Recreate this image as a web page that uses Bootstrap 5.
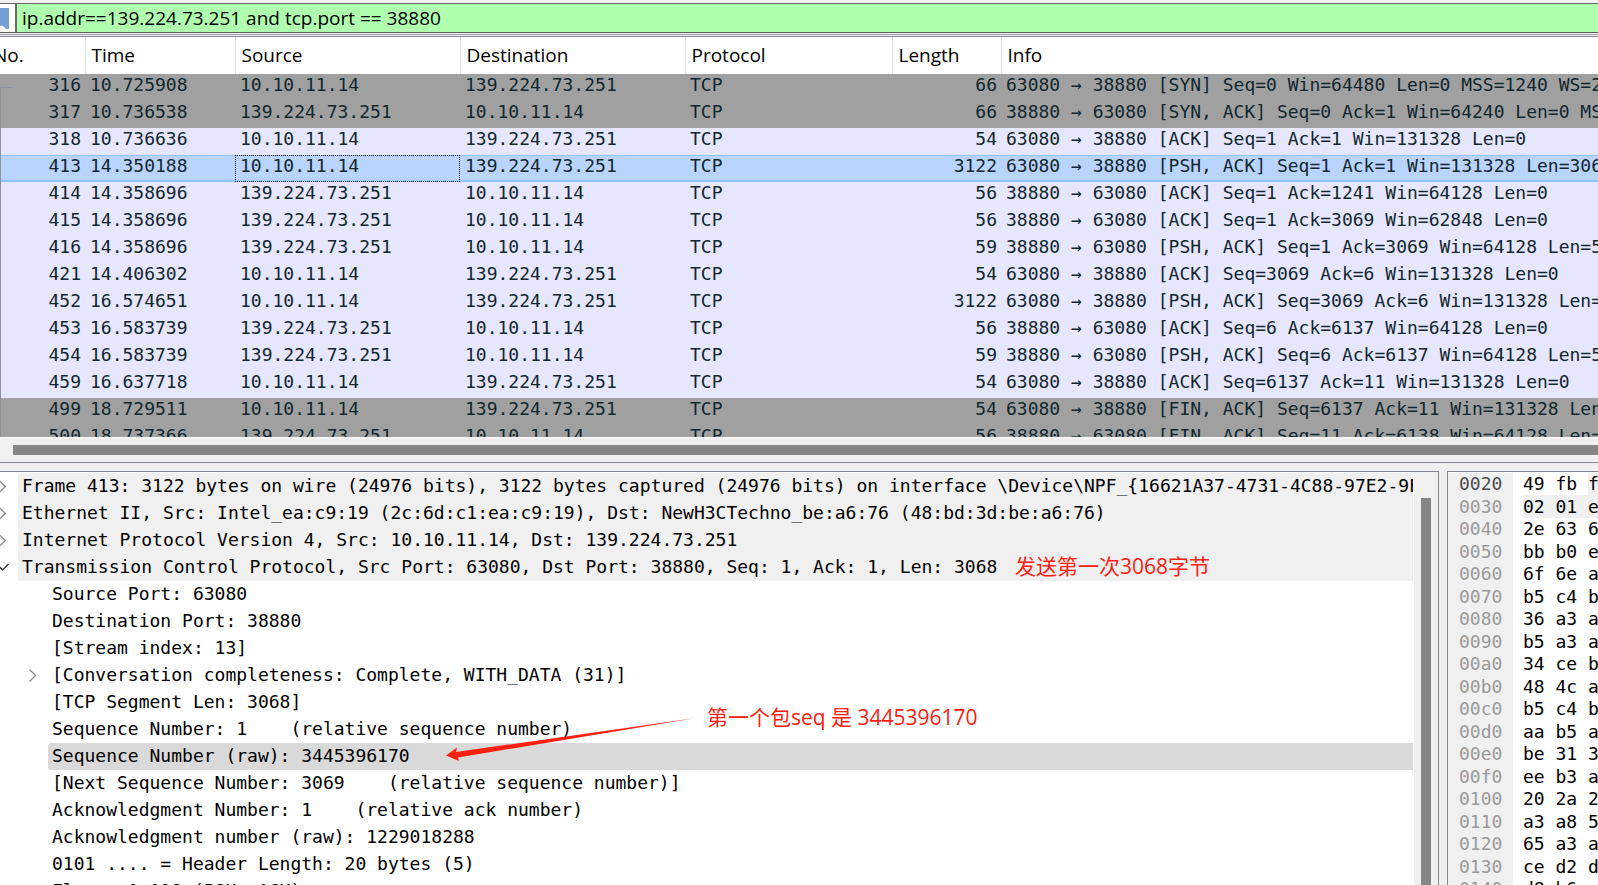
<!DOCTYPE html>
<html lang="en">
<head>
<meta charset="utf-8">
<meta name="viewport" content="width=device-width, initial-scale=1">
<title>Packet capture</title>
<link href="https://cdn.jsdelivr.net/npm/bootstrap@5.3.0/dist/css/bootstrap.min.css" rel="stylesheet">
<style>
  body { background: #f0f0f0; color: #000; font: 19px/28px "Open Sans", "Noto Sans CJK SC", sans-serif; }
  .mono { font-family: Consolas, "DejaVu Sans Mono", monospace; font-size: 18px; }

  /* Display filter */
  .filterbar { margin-top: 3px; border-top: 1px solid #6b6b6b; border-bottom: 1px solid #5a5a5a; background: #afffaf; }
  .bookmark { width: 17px; height: 28px; border: 0; padding: 0; background: #fff; border-right: 2px solid #6a6a6a; }
  .filter-input { height: 28px; border: 0; padding: 0 5px; background: #afffaf; color: #000; outline: 0; }

  /* Packet list */
  .packet-pane { margin-top: 1px; border-top: 1px solid #a0a0a0; padding-top: 1px; border-bottom: 1px solid #828790; }
  .packet-view { height: 401px; border-top: 1px solid #828790; background: #fff; }
  .packets { table-layout: fixed; width: 100%; white-space: nowrap; color: #12272e; }
  .packets th, .packets td { padding: 0 0 5px 5px; line-height: 22px; overflow: hidden; }
  .packets th { font: 400 19px/28px "Open Sans", sans-serif; color: #000; padding: 4px 0 5px 6px; border-right: 1px solid #e2e2e2; }
  .packets th:last-child { border-right: 0; }
  .packets th:first-child { padding-left: 0; text-indent: -7px; }
  .packets .num { text-align: right; padding-right: 4px; }
  .c-no { width: 85px; } .c-time { width: 150px; } .c-addr { width: 225px; } .c-proto { width: 207px; } .c-len { width: 109px; }
  .row-edge { background: #a0a0a0; }
  .row-tcp { background: #e7e6ff; }
  .row-picked { background: #b8d4ff; box-shadow: inset 0 1px #8fc1fa, inset 0 -2px #8fc1fa; }
  .cell-focus { outline: 1px dotted #000; outline-offset: -1px; }
  .stream-line { left: 0; top: 50px; bottom: 0; width: 12px; border-left: 1px solid #8a929c; border-top: 1px solid #8a929c; }
  .hscroll { padding: 7px 0 7px 13px; border-top: 1px solid #fff; }
  .hthumb { height: 10px; background: #868686; }

  /* Lower panes */
  .panes { margin-top: 8px; gap: 8px; min-height: 0; }
  .pane { border-top: 1px solid #828790; background: #fff; min-height: 0; }
  .tree-pane { border-right: 1px solid #828790; min-width: 0; }
  .tree { line-height: 25px; padding-top: 1px; min-width: 0; }
  .tree li { display: flex; }
  .twig { flex: none; width: 18px; height: 27px; }
  .deep .twig { width: 48px; }
  .label-text { flex: 1; min-width: 0; overflow: hidden; padding-left: 4px; white-space: pre; }
  .layer .label-text { background: #f0f0f0; }
  .chosen .label-text { background: #d9d9d9; border-radius: 3px 0 0 3px; }
  .vscroll { width: 25px; padding: 26px 7px 0; background: #f0f0f0; border-left: 1px solid #fff; }
  .vthumb { background: #868686; height: 100%; }
  .bytes-pane { width: 151px; border-left: 1px solid #828790; padding-top: 1px; }
  .bytes { line-height: 22px; white-space: pre; width: 100%; table-layout: fixed; }
  .bytes tr:nth-child(even) td, .bytes tr:nth-child(even) th { height: 23px; line-height: 23px; }
  .bytes td, .bytes th { padding: 0; overflow: hidden; }
  .bytes th { width: 65px; padding-left: 11px; font-weight: 400; background: #f0f0f0; color: #9a9a9a; }
  .bytes .now th { color: #4c4c4c; }
  .bytes td { padding-left: 10px; }
  .shade { display: inline-block; width: 100%; background: #f0f0f0; }

  /* Annotations over the tree */
  .remark { position: absolute; color: #ff2010; font-size: 21px; white-space: nowrap; }
  .remark-a { left: 1015px; top: 80px; }
  .remark-b { left: 707px; top: 231px; }
  .arrow { position: absolute; left: 446px; top: 243px; }
</style>
</head>
<body class="vh-100 d-flex flex-column overflow-hidden">
<header class="filterbar d-flex">
  <button class="bookmark flex-shrink-0 d-flex" type="button" aria-label="Filter bookmarks">
    <svg width="10" height="28" viewBox="0 0 10 28"><path d="M0 4h9v21H6Q3 20 0 22z" fill="#729fd6"/></svg>
  </button>
  <input class="filter-input flex-grow-1" type="text" aria-label="Display filter" value="ip.addr==139.224.73.251 and tcp.port == 38880">
</header>

<section class="packet-pane">
  <div class="packet-view overflow-hidden position-relative">
    <table class="packets mono">
      <colgroup><col class="c-no"><col class="c-time"><col class="c-addr"><col class="c-addr"><col class="c-proto"><col class="c-len"><col></colgroup>
      <thead><tr><th>No.</th><th>Time</th><th>Source</th><th>Destination</th><th>Protocol</th><th>Length</th><th>Info</th></tr></thead>
      <tbody>
        <tr class="row-edge"><td class="num">316</td><td>10.725908</td><td>10.10.11.14</td><td>139.224.73.251</td><td>TCP</td><td class="num">66</td><td>63080 → 38880 [SYN] Seq=0 Win=64480 Len=0 MSS=1240 WS=256</td></tr>
        <tr class="row-edge"><td class="num">317</td><td>10.736538</td><td>139.224.73.251</td><td>10.10.11.14</td><td>TCP</td><td class="num">66</td><td>38880 → 63080 [SYN, ACK] Seq=0 Ack=1 Win=64240 Len=0 MSS=1460</td></tr>
        <tr class="row-tcp"><td class="num">318</td><td>10.736636</td><td>10.10.11.14</td><td>139.224.73.251</td><td>TCP</td><td class="num">54</td><td>63080 → 38880 [ACK] Seq=1 Ack=1 Win=131328 Len=0</td></tr>
        <tr class="row-picked"><td class="num">413</td><td>14.350188</td><td class="cell-focus">10.10.11.14</td><td>139.224.73.251</td><td>TCP</td><td class="num">3122</td><td>63080 → 38880 [PSH, ACK] Seq=1 Ack=1 Win=131328 Len=3068</td></tr>
        <tr class="row-tcp"><td class="num">414</td><td>14.358696</td><td>139.224.73.251</td><td>10.10.11.14</td><td>TCP</td><td class="num">56</td><td>38880 → 63080 [ACK] Seq=1 Ack=1241 Win=64128 Len=0</td></tr>
        <tr class="row-tcp"><td class="num">415</td><td>14.358696</td><td>139.224.73.251</td><td>10.10.11.14</td><td>TCP</td><td class="num">56</td><td>38880 → 63080 [ACK] Seq=1 Ack=3069 Win=62848 Len=0</td></tr>
        <tr class="row-tcp"><td class="num">416</td><td>14.358696</td><td>139.224.73.251</td><td>10.10.11.14</td><td>TCP</td><td class="num">59</td><td>38880 → 63080 [PSH, ACK] Seq=1 Ack=3069 Win=64128 Len=5</td></tr>
        <tr class="row-tcp"><td class="num">421</td><td>14.406302</td><td>10.10.11.14</td><td>139.224.73.251</td><td>TCP</td><td class="num">54</td><td>63080 → 38880 [ACK] Seq=3069 Ack=6 Win=131328 Len=0</td></tr>
        <tr class="row-tcp"><td class="num">452</td><td>16.574651</td><td>10.10.11.14</td><td>139.224.73.251</td><td>TCP</td><td class="num">3122</td><td>63080 → 38880 [PSH, ACK] Seq=3069 Ack=6 Win=131328 Len=3068</td></tr>
        <tr class="row-tcp"><td class="num">453</td><td>16.583739</td><td>139.224.73.251</td><td>10.10.11.14</td><td>TCP</td><td class="num">56</td><td>38880 → 63080 [ACK] Seq=6 Ack=6137 Win=64128 Len=0</td></tr>
        <tr class="row-tcp"><td class="num">454</td><td>16.583739</td><td>139.224.73.251</td><td>10.10.11.14</td><td>TCP</td><td class="num">59</td><td>38880 → 63080 [PSH, ACK] Seq=6 Ack=6137 Win=64128 Len=5</td></tr>
        <tr class="row-tcp"><td class="num">459</td><td>16.637718</td><td>10.10.11.14</td><td>139.224.73.251</td><td>TCP</td><td class="num">54</td><td>63080 → 38880 [ACK] Seq=6137 Ack=11 Win=131328 Len=0</td></tr>
        <tr class="row-edge"><td class="num">499</td><td>18.729511</td><td>10.10.11.14</td><td>139.224.73.251</td><td>TCP</td><td class="num">54</td><td>63080 → 38880 [FIN, ACK] Seq=6137 Ack=11 Win=131328 Len=0</td></tr>
        <tr class="row-edge"><td class="num">500</td><td>18.737366</td><td>139.224.73.251</td><td>10.10.11.14</td><td>TCP</td><td class="num">56</td><td>38880 → 63080 [FIN, ACK] Seq=11 Ack=6138 Win=64128 Len=0</td></tr>
      </tbody>
    </table>
    <div class="stream-line position-absolute"></div>
  </div>
  <div class="hscroll"><div class="hthumb"></div></div>
</section>

<main class="panes d-flex flex-grow-1">
  <section class="pane tree-pane d-flex flex-grow-1 position-relative overflow-hidden">
    <ul class="tree mono list-unstyled mb-0 flex-grow-1">
      <li class="layer"><svg class="twig" viewBox="0 0 18 27"><path d="M-1 7.500l6.500 6-6.500 6" fill="none" stroke="#8a8a8a" stroke-width="1.300"/></svg><span class="label-text">Frame 413: 3122 bytes on wire (24976 bits), 3122 bytes captured (24976 bits) on interface \Device\NPF_{16621A37-4731-4C88-97E2-9EA</span></li>
      <li class="layer"><svg class="twig" viewBox="0 0 18 27"><path d="M-1 7.500l6.500 6-6.500 6" fill="none" stroke="#8a8a8a" stroke-width="1.300"/></svg><span class="label-text">Ethernet II, Src: Intel_ea:c9:19 (2c:6d:c1:ea:c9:19), Dst: NewH3CTechno_be:a6:76 (48:bd:3d:be:a6:76)</span></li>
      <li class="layer"><svg class="twig" viewBox="0 0 18 27"><path d="M-1 7.500l6.500 6-6.500 6" fill="none" stroke="#8a8a8a" stroke-width="1.300"/></svg><span class="label-text">Internet Protocol Version 4, Src: 10.10.11.14, Dst: 139.224.73.251</span></li>
      <li class="layer"><svg class="twig" viewBox="0 0 18 27"><path d="M-3 10l5.500 6 6-6" fill="none" stroke="#333" stroke-width="1.500"/></svg><span class="label-text">Transmission Control Protocol, Src Port: 63080, Dst Port: 38880, Seq: 1, Ack: 1, Len: 3068</span></li>
      <li class="deep"><span class="twig"></span><span class="label-text">Source Port: 63080</span></li>
      <li class="deep"><span class="twig"></span><span class="label-text">Destination Port: 38880</span></li>
      <li class="deep"><span class="twig"></span><span class="label-text">[Stream index: 13]</span></li>
      <li class="deep"><svg class="twig" viewBox="0 0 48 27"><path d="M29.500 7.500l6 6-6 6" fill="none" stroke="#8a8a8a" stroke-width="1.300"/></svg><span class="label-text">[Conversation completeness: Complete, WITH_DATA (31)]</span></li>
      <li class="deep"><span class="twig"></span><span class="label-text">[TCP Segment Len: 3068]</span></li>
      <li class="deep"><span class="twig"></span><span class="label-text">Sequence Number: 1    (relative sequence number)</span></li>
      <li class="deep chosen"><span class="twig"></span><span class="label-text">Sequence Number (raw): 3445396170</span></li>
      <li class="deep"><span class="twig"></span><span class="label-text">[Next Sequence Number: 3069    (relative sequence number)]</span></li>
      <li class="deep"><span class="twig"></span><span class="label-text">Acknowledgment Number: 1    (relative ack number)</span></li>
      <li class="deep"><span class="twig"></span><span class="label-text">Acknowledgment number (raw): 1229018288</span></li>
      <li class="deep"><span class="twig"></span><span class="label-text">0101 .... = Header Length: 20 bytes (5)</span></li>
      <li class="deep"><span class="twig"></span><span class="label-text">Flags: 0x018 (PSH, ACK)</span></li>
    </ul>
    <div class="vscroll flex-shrink-0"><div class="vthumb"></div></div>
    <div class="remark remark-a">发送第一次3068字节</div>
    <div class="remark remark-b">第一个包seq 是 3445396170</div>
    <svg class="arrow" width="254" height="48" viewBox="0 0 254 48"><path d="M0 40.500L11 32.500 10 37 250 3 12 42.500 13 46z" fill="#ff2010"/></svg>
  </section>
  <section class="pane bytes-pane flex-shrink-0 overflow-hidden">
    <table class="bytes mono">
      <tbody>
        <tr class="now"><th>0020</th><td>49 fb <span class="shade">f</span></td></tr>
        <tr><th>0030</th><td><span class="shade">02 01 e</span></td></tr>
        <tr><th>0040</th><td>2e 63 6</td></tr>
        <tr><th>0050</th><td>bb b0 e</td></tr>
        <tr><th>0060</th><td>6f 6e a</td></tr>
        <tr><th>0070</th><td>b5 c4 b</td></tr>
        <tr><th>0080</th><td>36 a3 a</td></tr>
        <tr><th>0090</th><td>b5 a3 a</td></tr>
        <tr><th>00a0</th><td>34 ce b</td></tr>
        <tr><th>00b0</th><td>48 4c a</td></tr>
        <tr><th>00c0</th><td>b5 c4 b</td></tr>
        <tr><th>00d0</th><td>aa b5 a</td></tr>
        <tr><th>00e0</th><td>be 31 3</td></tr>
        <tr><th>00f0</th><td>ee b3 a</td></tr>
        <tr><th>0100</th><td>20 2a 2</td></tr>
        <tr><th>0110</th><td>a3 a8 5</td></tr>
        <tr><th>0120</th><td>65 a3 a</td></tr>
        <tr><th>0130</th><td>ce d2 d</td></tr>
        <tr><th>0140</th><td>d8 b6</td></tr>
      </tbody>
    </table>
  </section>
</main>
<script src="https://cdn.jsdelivr.net/npm/bootstrap@5.3.0/dist/js/bootstrap.bundle.min.js"></script>
</body>
</html>
